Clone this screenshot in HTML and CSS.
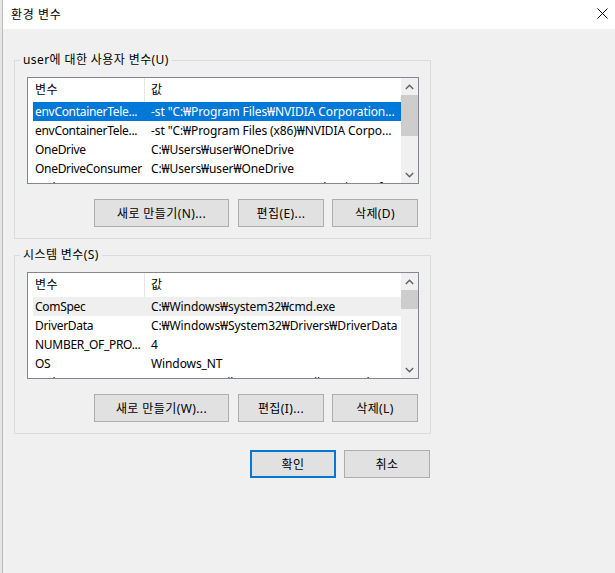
FILE: index.html
```html
<!DOCTYPE html>
<html lang="ko">
<head>
<meta charset="utf-8">
<title>환경 변수</title>
<link rel="stylesheet" href="styles.css">
</head>
<body>
<div class="screen">
  <div class="edge"></div>
  <div class="window">
    <div class="titlebar">
      <span class="title">환경 변수</span>
      <svg class="close" width="11" height="11" viewBox="0 0 11 11"><path d="M0.5 0.5 L10.5 10.5 M10.5 0.5 L0.5 10.5" stroke="#000" stroke-width="1" fill="none"/></svg>
    </div>
    <div class="content">
      <section class="group">
        <div class="group-label">user에 대한 사용자 변수(U)</div>
        <div class="list">
          <div class="list-main">
            <div class="list-head">
              <div class="head-cell head-name">변수</div>
              <div class="head-cell head-value">값</div>
            </div>
            <div class="row selected"><span class="cell-name">envContainerTele...</span><span class="cell-value">-st "C:₩Program Files₩NVIDIA Corporation...</span></div>
            <div class="row"><span class="cell-name">envContainerTele...</span><span class="cell-value">-st "C:₩Program Files (x86)₩NVIDIA Corpo...</span></div>
            <div class="row"><span class="cell-name">OneDrive</span><span class="cell-value">C:₩Users₩user₩OneDrive</span></div>
            <div class="row"><span class="cell-name">OneDriveConsumer</span><span class="cell-value">C:₩Users₩user₩OneDrive</span></div>
            <div class="row"><span class="cell-name">Path</span><span class="cell-value">C:₩Users₩user₩AppData₩Local₩Microsoft₩WindowsApps;</span></div>
          </div>
          <div class="vscroll">
            <div class="sb-btn"><svg width="9" height="6" viewBox="0 0 9 6"><path d="M0.8 5 L4.5 1.3 L8.2 5" stroke="#606060" stroke-width="1.4" fill="none"/></svg></div>
            <div class="sb-track"><div class="sb-thumb thumb-user"></div></div>
            <div class="sb-btn"><svg width="9" height="6" viewBox="0 0 9 6"><path d="M0.8 1 L4.5 4.7 L8.2 1" stroke="#606060" stroke-width="1.4" fill="none"/></svg></div>
          </div>
        </div>
        <div class="btn-row">
          <button class="btn btn-wide">새로 만들기(N)...</button>
          <button class="btn">편집(E)...</button>
          <button class="btn">삭제(D)</button>
        </div>
      </section>

      <section class="group">
        <div class="group-label">시스템 변수(S)</div>
        <div class="list">
          <div class="list-main">
            <div class="list-head">
              <div class="head-cell head-name">변수</div>
              <div class="head-cell head-value">값</div>
            </div>
            <div class="row hover"><span class="cell-name">ComSpec</span><span class="cell-value">C:₩Windows₩system32₩cmd.exe</span></div>
            <div class="row"><span class="cell-name">DriverData</span><span class="cell-value">C:₩Windows₩System32₩Drivers₩DriverData</span></div>
            <div class="row"><span class="cell-name">NUMBER_OF_PRO...</span><span class="cell-value">4</span></div>
            <div class="row"><span class="cell-name">OS</span><span class="cell-value">Windows_NT</span></div>
            <div class="row"><span class="cell-name">Path</span><span class="cell-value">C:₩Program Files₩Common Files₩Oracle₩Java₩javapath;</span></div>
          </div>
          <div class="vscroll">
            <div class="sb-btn"><svg width="9" height="6" viewBox="0 0 9 6"><path d="M0.8 5 L4.5 1.3 L8.2 5" stroke="#606060" stroke-width="1.4" fill="none"/></svg></div>
            <div class="sb-track"><div class="sb-thumb thumb-system"></div></div>
            <div class="sb-btn"><svg width="9" height="6" viewBox="0 0 9 6"><path d="M0.8 1 L4.5 4.7 L8.2 1" stroke="#606060" stroke-width="1.4" fill="none"/></svg></div>
          </div>
        </div>
        <div class="btn-row">
          <button class="btn btn-wide">새로 만들기(W)...</button>
          <button class="btn">편집(I)...</button>
          <button class="btn">삭제(L)</button>
        </div>
      </section>

      <div class="dialog-actions">
        <button class="btn btn-default">확인</button>
        <button class="btn">취소</button>
      </div>
    </div>
  </div>
</div>
</body>
</html>
```
FILE: styles.css
```css
html, body {
  margin: 0;
  padding: 0;
}
body {
  width: 615px;
  height: 573px;
  overflow: hidden;
  background: #f0f0f0;
  font-family: "Noto Sans", "Noto Sans CJK KR", sans-serif;
  font-size: 12px;
  color: #000;
}
.screen {
  display: flex;
  height: 573px;
}
.edge {
  width: 2px;
  background: #e6e6e6;
  border-right: 1px solid #bcbcbc;
}
.window {
  flex: 1;
  display: flex;
  flex-direction: column;
  background: #f0f0f0;
}
.titlebar {
  height: 29px;
  background: #fff;
  display: flex;
  align-items: center;
  justify-content: space-between;
  padding: 0 7px 0 8px;
}
.title {
  line-height: 16px;
  letter-spacing: 0.6px;
}
.close {
  display: block;
  margin-top: -2px;
}
.content {
  padding: 31px 0 0 11px;
}
.group {
  width: 417px;
  box-sizing: border-box;
  border: 1px solid #dcdcdc;
  padding: 0 11px 11px 12px;
}
.group + .group {
  margin-top: 16px;
}
.group-label {
  width: fit-content;
  height: 16px;
  line-height: 16px;
  margin: -9px 0 0 -7px;
  padding: 0 3px;
  background: #f0f0f0;
  white-space: nowrap;
  letter-spacing: 0.4px;
}
.list {
  margin-top: 9px;
  height: 107px;
  box-sizing: border-box;
  border: 1px solid #828790;
  background: #fff;
  display: flex;
}
.list-main {
  flex: 1;
  overflow: hidden;
}
.list-head {
  display: flex;
  height: 24px;
}
.head-cell {
  box-sizing: border-box;
  line-height: 24px;
  white-space: nowrap;
  letter-spacing: 0.4px;
}
.head-name {
  width: 117px;
  padding-left: 7px;
  border-right: 1px solid #e5e5e5;
}
.head-value {
  padding-left: 6px;
}
.row {
  display: flex;
  height: 19px;
  line-height: 19px;
  margin-left: 5px;
  white-space: nowrap;
  overflow: hidden;
}
.row.selected {
  background: #0078d7;
  color: #fff;
}
.row.hover {
  background: #efefef;
}
.cell-name {
  flex: none;
  width: 116px;
  box-sizing: border-box;
  padding-left: 2px;
  overflow: hidden;
  letter-spacing: -0.3px;
}
.cell-value {
  padding-left: 2px;
  letter-spacing: -0.1px;
}
.vscroll {
  width: 17px;
  flex: none;
  background: #f0f0f0;
  display: flex;
  flex-direction: column;
}
.sb-btn {
  height: 17px;
  flex: none;
  display: flex;
  align-items: center;
  justify-content: center;
}
.sb-btn svg {
  display: block;
}
.sb-track {
  flex: 1;
}
.sb-thumb {
  background: #cdcdcd;
}
.thumb-user {
  height: 41px;
}
.thumb-system {
  height: 19px;
}
.btn-row {
  display: flex;
  justify-content: flex-end;
  gap: 8px;
  margin-top: 15px;
  padding-right: 1px;
}
.btn {
  width: 86px;
  height: 28px;
  box-sizing: border-box;
  border: 1px solid #adadad;
  background: #e1e1e1;
  font-family: inherit;
  font-size: 12px;
  letter-spacing: 0.4px;
  color: #000;
  padding: 0;
  margin: 0;
  white-space: nowrap;
}
.btn-wide {
  width: 135px;
  margin-right: 1px;
}
.btn-default {
  border: 2px solid #0078d7;
}
.dialog-actions {
  width: 417px;
  box-sizing: border-box;
  display: flex;
  justify-content: flex-end;
  gap: 8px;
  margin-top: 16px;
  padding-right: 1px;
}
```
